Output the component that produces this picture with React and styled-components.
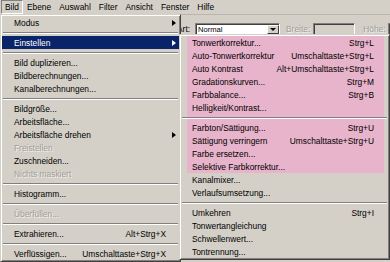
import React from "react";
import styled, { createGlobalStyle, css } from "styled-components";

const GlobalStyle = createGlobalStyle`
  body {
    margin: 0;
    background: #d4d0c8;
    font-family: "Liberation Sans", Arial, sans-serif;
  }
`;

const Screen = styled.div`
  position: relative;
  width: 390px;
  height: 262px;
  overflow: hidden;
  background: #d4d0c8;
  font-size: 8.4px;
  color: #000;
`;

const MenuBar = styled.div`
  display: flex;
  height: 14px;
  padding-left: 1px;
`;

const BarItem = styled.div`
  padding: 0 3px;
  line-height: 12px;
  border: 1px solid transparent;
  ${(p) =>
    p.$open &&
    css`
      border-color: #808080 #fff #fff #808080;
    `}
`;

const OptionsBar = styled.div`
  display: flex;
  align-items: center;
  height: 28px;
  padding-left: 177px;
  border-top: 1px solid #b9b5ad;
`;

const Label = styled.span`
  flex-shrink: 0;
  color: ${(p) => (p.$disabled ? "#a19e97" : "#000")};
  margin-right: ${(p) => p.$gap || 0}px;
  ${(p) =>
    p.$disabled &&
    css`
      text-shadow: 1px 1px 0 rgba(255, 255, 255, 0.7);
    `}
`;

const Field = styled.div`
  flex-shrink: 0;
  display: flex;
  align-items: center;
  box-sizing: border-box;
  width: ${(p) => p.$w}px;
  height: 12px;
  margin-right: ${(p) => p.$gap || 0}px;
  padding-left: 2px;
  background: ${(p) => (p.$disabled ? "#d4d0c8" : "#fff")};
  border: 1px solid;
  border-color: #808080 #fff #fff #808080;
  box-shadow: inset 1px 1px 0 #404040;
`;

const FieldText = styled.span`
  flex: 1;
  font-size: 7.6px;
`;

const DropButton = styled.div`
  display: flex;
  align-items: center;
  justify-content: center;
  width: 12px;
  height: 9px;
  background: #d4d0c8;
  border: 1px solid;
  border-color: #fff #404040 #404040 #fff;
  box-sizing: border-box;

  &::after {
    content: "";
    border-top: 3px solid #000;
    border-left: 3px solid transparent;
    border-right: 3px solid transparent;
  }
`;

const Menu = styled.div`
  position: absolute;
  top: ${(p) => p.$top}px;
  left: ${(p) => p.$left}px;
  width: ${(p) => p.$width}px;
  box-sizing: border-box;
  padding: 1px;
  background: #d4d0c8;
  border: 1px solid;
  border-color: #d4d0c8 #404040 #404040 #d4d0c8;
  box-shadow: inset 1px 1px 0 #fff, inset -1px -1px 0 #808080;
`;

const Marked = styled.div`
  margin: 0 4px 0 6px;
  background: #e8b4cb;
`;

const Row = styled.div`
  display: flex;
  align-items: center;
  height: 13px;
  padding: 0 ${(p) => p.$right}px 0 ${(p) => p.$left}px;
  white-space: nowrap;
  ${(p) =>
    p.$active &&
    css`
      background: #0a246a;
      color: #fff;
    `}
  ${(p) =>
    p.$disabled &&
    css`
      color: #a19e97;
      text-shadow: 1px 1px 0 rgba(255, 255, 255, 0.7);
    `}
`;

const Shortcut = styled.span`
  margin-left: auto;
`;

const Arrow = styled.span`
  margin-left: auto;
  width: 0;
  height: 0;
  border-left: 4px solid currentColor;
  border-top: 3.5px solid transparent;
  border-bottom: 3.5px solid transparent;
`;

const Separator = styled.div`
  display: flex;
  align-items: center;
  height: 7px;
  margin: ${(p) => (p.$bleed ? "0 -3px 0 -5px" : "0 1px")};

  &::before {
    content: "";
    flex: 1;
    border-top: 1px solid #808080;
    border-bottom: 1px solid #fff;
  }
`;

const imageMenu = [
  { label: "Modus", arrow: true },
  "sep",
  { label: "Einstellen", arrow: true, active: true },
  "sep",
  { label: "Bild duplizieren..." },
  { label: "Bildberechnungen..." },
  { label: "Kanalberechnungen..." },
  "sep",
  { label: "Bildgröße..." },
  { label: "Arbeitsfläche..." },
  { label: "Arbeitsfläche drehen", arrow: true },
  { label: "Freistellen", disabled: true },
  { label: "Zuschneiden..." },
  { label: "Nichts maskiert", disabled: true },
  "sep",
  { label: "Histogramm..." },
  "sep",
  { label: "Überfüllen...", disabled: true },
  "sep",
  { label: "Extrahieren...", keys: "Alt+Strg+X" },
  "sep",
  { label: "Verflüssigen...", keys: "Umschalttaste+Strg+X" },
];

const markedItems = [
  { label: "Tonwertkorrektur...", keys: "Strg+L" },
  { label: "Auto-Tonwertkorrektur", keys: "Umschalttaste+Strg+L" },
  { label: "Auto Kontrast", keys: "Alt+Umschalttaste+Strg+L" },
  { label: "Gradationskurven...", keys: "Strg+M" },
  { label: "Farbbalance...", keys: "Strg+B" },
  { label: "Helligkeit/Kontrast..." },
  "sep",
  { label: "Farbton/Sättigung...", keys: "Strg+U" },
  { label: "Sättigung verringern", keys: "Umschalttaste+Strg+U" },
  { label: "Farbe ersetzen..." },
  { label: "Selektive Farbkorrektur..." },
];

const restItems = [
  { label: "Kanalmixer..." },
  { label: "Verlaufsumsetzung..." },
  "sep",
  { label: "Umkehren", keys: "Strg+I" },
  { label: "Tonwertangleichung" },
  { label: "Schwellenwert..." },
  { label: "Tontrennung..." },
];

const Items = ({ items, left, right, bleed }) =>
  items.map((it, i) =>
    it === "sep" ? (
      <Separator key={i} $bleed={bleed} />
    ) : (
      <Row
        key={i}
        $left={left}
        $right={it.arrow ? 3 : right}
        $active={it.active}
        $disabled={it.disabled}
      >
        <span>{it.label}</span>
        {it.keys && <Shortcut>{it.keys}</Shortcut>}
        {it.arrow && <Arrow />}
      </Row>
    )
  );

const menuNames = ["Bild", "Ebene", "Auswahl", "Filter", "Ansicht", "Fenster", "Hilfe"];

export default function App() {
  return (
    <Screen>
      <GlobalStyle />
      <MenuBar>
        {menuNames.map((n, i) => (
          <BarItem key={n} $open={i === 0}>
            {n}
          </BarItem>
        ))}
      </MenuBar>

      <OptionsBar>
        <Label $gap={5}>Art:</Label>
        <Field $w={85} $gap={6}>
          <FieldText>Normal</FieldText>
          <DropButton />
        </Field>
        <Label $disabled $gap={3}>Breite:</Label>
        <Field $w={42} $gap={8} $disabled />
        <Label $disabled $gap={2}>Höhe:</Label>
        <Field $w={30} $disabled />
      </OptionsBar>

      <Menu $top={14} $left={0} $width={181}>
        <Items items={imageMenu} left={12} right={13} />
      </Menu>

      <Menu $top={34} $left={179} $width={211}>
        <Marked>
          <Items items={markedItems} left={5} right={10} bleed />
        </Marked>
        <Items items={restItems} left={11} right={14} />
      </Menu>
    </Screen>
  );
}
